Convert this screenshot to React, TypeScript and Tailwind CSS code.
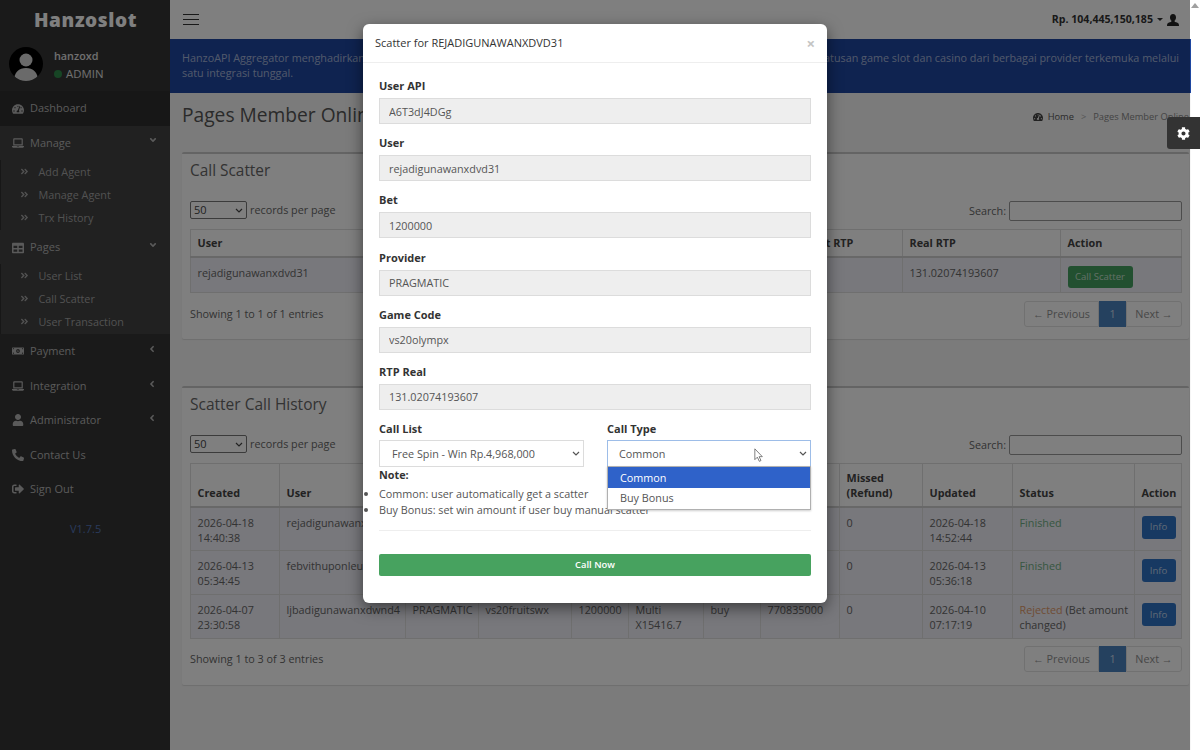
import {
  FaTachometerAlt,
  FaLaptop,
  FaTable,
  FaMoneyBillAlt,
  FaUser,
  FaPhoneAlt,
  FaSignOutAlt,
  FaCog,
  FaAngleDoubleRight,
  FaAngleDown,
  FaAngleLeft,
} from "react-icons/fa";
import type { ReactNode } from "react";

function MenuRow({ icon, label, arrow, rowClass = "h-[34.5px]" }: { icon: ReactNode; label: string; arrow?: "down" | "left"; rowClass?: string }) {
  return (
    <div className={"relative flex items-center pl-3 text-[#b5b5b5] " + rowClass}>
      <span className="flex w-[18px] justify-start text-[12px]">{icon}</span>
      <span>{label}</span>
      {arrow === "down" && <FaAngleDown className="absolute right-[12px] top-[9px] text-[10px]" />}
      {arrow === "left" && <FaAngleLeft className="absolute right-[13px] top-[10px] text-[10px]" />}
    </div>
  );
}

function SubRow({ label }: { label: string }) {
  return (
    <div className="flex h-[23.2px] items-center border-l-[1.5px] border-[#2e2e2e] pl-[18.5px] text-[10.8px] text-[#a4a4a4]">
      <FaAngleDoubleRight className="mr-[10px] text-[9px]" />
      <span>{label}</span>
    </div>
  );
}

function Sidebar() {
  return (
    <aside className="w-[170px] shrink-0 bg-[#343434] text-[11px]">
      <div className="flex h-[40px] items-center justify-center pl-[1px] text-[19px] font-extrabold tracking-[0.6px] text-white">
        Hanzoslot
      </div>
      <div className="flex h-[51px] items-start pl-[9px] pt-[7px]">
        <div className="h-[34px] w-[34px] overflow-hidden rounded-full bg-black">
          <svg viewBox="0 0 34 34" className="h-full w-full">
            <circle cx="17" cy="13" r="6.5" fill="#d4d4d4" />
            <path d="M5 34c0-9 5-13 12-13s12 4 12 13z" fill="#d4d4d4" />
          </svg>
        </div>
        <div className="ml-[11px] text-[#e0e0e0]">
          <div className="h-[18px] text-[10.8px] font-semibold leading-[18px]">hanzoxd</div>
          <div className="flex h-[18px] items-center text-[11.4px]">
            <span className="mr-[4px] h-[8px] w-[8px] rounded-full bg-[#2e8a4a]" />
            ADMIN
          </div>
        </div>
      </div>
      <MenuRow icon={<FaTachometerAlt />} label="Dashboard" rowClass="h-[35px] bg-[#2e2e2e]" />
      <div className="h-[105px] bg-[#424242]">
        <MenuRow icon={<FaLaptop />} label="Manage" arrow="down" rowClass="h-[34px]" />
        <SubRow label="Add Agent" />
        <SubRow label="Manage Agent" />
        <SubRow label="Trx History" />
      </div>
      <div className="h-[103px] bg-[#424242]">
        <MenuRow icon={<FaTable />} label="Pages" arrow="down" rowClass="h-[33px]" />
        <SubRow label="User List" />
        <SubRow label="Call Scatter" />
        <SubRow label="User Transaction" />
      </div>
      <MenuRow icon={<FaMoneyBillAlt />} label="Payment" arrow="left" />
      <MenuRow icon={<FaLaptop />} label="Integration" arrow="left" />
      <MenuRow icon={<FaUser />} label="Administrator" arrow="left" />
      <MenuRow icon={<FaPhoneAlt />} label="Contact Us" />
      <MenuRow icon={<FaSignOutAlt />} label="Sign Out" />
      <div className="mt-[14px] pl-[70px] text-[#5476b8]">V1.7.5</div>
    </aside>
  );
}

function Chevron({ className }: { className: string }) {
  return (
    <svg viewBox="0 0 8 5" className={"pointer-events-none absolute h-[5px] w-[8px] " + className}>
      <path d="M1 1l3 3 3-3" fill="none" stroke="currentColor" strokeWidth="1.2" />
    </svg>
  );
}

function Pager() {
  return (
    <div className="flex h-[26px] text-[#8f8f8f]">
      <span className="flex w-[75px] items-center justify-center rounded-l-[3px] border border-[#e2e2e2]">← Previous</span>
      <span className="flex w-[27px] items-center justify-center bg-[#4a82be] text-white/70">1</span>
      <span className="flex w-[56px] items-center justify-center rounded-r-[3px] border border-[#e2e2e2]">Next →</span>
    </div>
  );
}

function TableTools() {
  return (
    <div className="flex items-start justify-between">
      <div className="flex h-[18px] items-center text-[#666]">
        <div className="relative mr-[3px] text-[#444]">
          <select defaultValue="50" className="block h-[18px] w-[57px] appearance-none rounded-[2px] border border-[#777] bg-white pl-[3px] text-[11px]">
            <option>50</option>
          </select>
          <Chevron className="right-[4px] top-[7px]" />
        </div>
        records per page
      </div>
      <div className="flex items-center text-[#666]">
        Search:
        <input className="ml-[3px] h-[20px] w-[173px] rounded-[2px] border border-[#999] bg-white" />
      </div>
    </div>
  );
}

const th = "border border-[#dedede] px-[6.5px] pb-[5px] align-bottom text-left font-bold text-[#444]";
const td = "border border-[#dedede] px-[6.5px] pt-[7px] align-top";

function CallScatterCard() {
  return (
    <section className="h-[187px] rounded-[2px] border-t-2 border-t-[#c8c8c8] bg-white pl-[8px] pr-[7px] shadow-[0_1px_1px_rgba(0,0,0,0.1)]">
      <h2 className="mb-[19px] mt-[6px] text-[15.4px] leading-[22px] text-[#666]">Call Scatter</h2>
      <TableTools />
      <table className="mt-[8px] w-[991px] table-fixed border-collapse text-[#666]">
        <colgroup>
          <col className="w-[598px]" />
          <col className="w-[114px]" />
          <col className="w-[158px]" />
          <col className="w-[121px]" />
        </colgroup>
        <thead>
          <tr className="h-[27px] border-b-2 border-b-[#d0d0d0]">
            <th className={th}>User</th>
            <th className={th}>Target RTP</th>
            <th className={th}>Real RTP</th>
            <th className={th}>Action</th>
          </tr>
        </thead>
        <tbody>
          <tr className="h-[36px] bg-[#f0f0f8]">
            <td className={td}>rejadigunawanxdvd31</td>
            <td className={td} />
            <td className={td}>131.02074193607</td>
            <td className={td + " !pt-[8px]"}>
              <button className="block h-[22px] w-[65px] rounded-[3px] bg-[#44a060] text-[9.6px] text-white/70">Call Scatter</button>
            </td>
          </tr>
        </tbody>
      </table>
      <div className="mt-[8px] flex items-center justify-between text-[#666]">
        <span>Showing 1 to 1 of 1 entries</span>
        <Pager />
      </div>
    </section>
  );
}

const historyRows = [
  { created: ["2026-04-18", "14:40:38"], user: "rejadigunawanxdvd31", updated: ["2026-04-18", "14:52:44"], status: "Finished" },
  { created: ["2026-04-13", "05:34:45"], user: "febvithuponleuwi", updated: ["2026-04-13", "05:36:18"], status: "Finished" },
  { created: ["2026-04-07", "23:30:58"], user: "ljbadigunawanxdwnd4", updated: ["2026-04-10", "07:17:19"], status: "Rejected" },
];

function HistoryCard() {
  return (
    <section className="mt-[47px] h-[299px] rounded-[2px] border-t-2 border-t-[#c8c8c8] bg-white pl-[8px] pr-[7px] shadow-[0_1px_1px_rgba(0,0,0,0.1)]">
      <h2 className="mb-[20px] mt-[5px] text-[15.5px] leading-[22px] text-[#666]">Scatter Call History</h2>
      <TableTools />
      <table className="mt-[8px] w-[991px] table-fixed border-collapse text-[#666]">
        <colgroup>
          <col className="w-[89px]" />
          <col className="w-[126px]" />
          <col className="w-[73px]" />
          <col className="w-[93px]" />
          <col className="w-[57px]" />
          <col className="w-[75px]" />
          <col className="w-[57px]" />
          <col className="w-[79px]" />
          <col className="w-[83px]" />
          <col className="w-[90px]" />
          <col className="w-[122px]" />
          <col className="w-[47px]" />
        </colgroup>
        <thead>
          <tr className="h-[43px] border-b-2 border-b-[#d0d0d0]">
            <th className={th}>Created</th>
            <th className={th}>User</th>
            <th className={th} />
            <th className={th} />
            <th className={th} />
            <th className={th} />
            <th className={th} />
            <th className={th} />
            <th className={th}>Missed (Refund)</th>
            <th className={th}>Updated</th>
            <th className={th}>Status</th>
            <th className={th}>Action</th>
          </tr>
        </thead>
        <tbody>
          {historyRows.map((row, i) => (
            <tr key={row.created[0]} className="h-[44px] bg-[#f0f0f8]">
              <td className={td}>
                {row.created[0]}
                <br />
                {row.created[1]}
              </td>
              <td className={td + " overflow-hidden whitespace-nowrap"}>{row.user}</td>
              <td className={td}>{i === 2 && "PRAGMATIC"}</td>
              <td className={td}>{i === 2 && "vs20fruitswx"}</td>
              <td className={td}>{i === 2 && "1200000"}</td>
              <td className={td}>{i === 2 && "Multi X15416.7"}</td>
              <td className={td}>{i === 2 && "buy"}</td>
              <td className={td}>{i === 2 && "770835000"}</td>
              <td className={td}>0</td>
              <td className={td}>
                {row.updated[0]}
                <br />
                {row.updated[1]}
              </td>
              <td className={td + " !pr-0"}>
                <span className={row.status === "Finished" ? "text-[#6fae82]" : "text-[#e09a6a]"}>{row.status}</span>
                {row.status === "Rejected" && " (Bet amount changed)"}
              </td>
              <td className={td + " !pt-[8px]"}>
                <button className="block h-[23px] w-[34px] rounded-[3px] bg-[#2f72c4] text-[9.6px] text-white/70">Info</button>
              </td>
            </tr>
          ))}
        </tbody>
      </table>
      <div className="mt-[7px] flex items-center justify-between text-[#666]">
        <span>Showing 1 to 3 of 3 entries</span>
        <Pager />
      </div>
    </section>
  );
}

function Content() {
  return (
    <main className="flex-1 bg-[#f6f6f6] text-[10.8px] leading-[15.4px]">
      <div className="flex h-[39px] items-center justify-between bg-white pl-[13px] pr-[12px]">
        <div className="flex w-[16px] flex-col gap-[3.5px]">
          <span className="h-[1.5px] bg-[#333]" />
          <span className="h-[1.5px] bg-[#333]" />
          <span className="h-[1.5px] bg-[#333]" />
        </div>
        <div className="flex items-center text-[#333]">
          <span className="text-[10.6px] font-bold">Rp. 104,445,150,185</span>
          <span className="ml-[4px] mr-[4px] h-0 w-0 border-x-[3px] border-t-[3px] border-x-transparent border-t-[#333]" />
          <svg viewBox="0 0 12 12" className="h-[12px] w-[12px] text-[#222]">
            <path d="M6 0c1.900 0 3 1.400 3 3.400 0 1.300-.6 2.600-1.400 3.200v1c0 .5 3 1 3.900 2 .3.4.5 1.300.5 2.400H0c0-1.100.2-2 .5-2.400.9-1 3.900-1.500 3.900-2v-1C3.600 6 3 4.700 3 3.400 3 1.400 4.100 0 6 0z" fill="currentColor" />
          </svg>
        </div>
      </div>
      <div className="h-[54px] bg-[#1e46a0] px-[12px] pt-[11px] leading-[15px] text-white/60">
        <div className="flex justify-between">
          <span>HanzoAPI Aggregator menghadirkan</span>
          <span>ratusan game slot dan casino dari berbagai provider terkemuka melalui</span>
        </div>
        <div>satu integrasi tunggal.</div>
      </div>
      <div className="flex h-[59px] items-start justify-between pl-[12px] pr-[2px]">
        <h1 className="mt-[8px] text-[19.2px] leading-[27px] text-[#555]">Pages Member Online</h1>
        <div className="mt-[16px] flex items-center text-[9.3px] text-[#888]">
          <FaTachometerAlt className="mr-[5px] text-[10px] text-[#444]" />
          <span className="text-[#555]">Home</span>
          <span className="mx-[7px] text-[#aaa]">&gt;</span>
          <span className="whitespace-nowrap">Pages Member Online</span>
        </div>
      </div>
      <div className="pl-[12px] pr-[2px]">
        <CallScatterCard />
        <HistoryCard />
      </div>
    </main>
  );
}

function Field({ label, value }: { label: string; value: string }) {
  return (
    <div className="mb-[5.2px]">
      <label className="block h-[26px] pt-[6px] text-[11px] font-bold leading-[16px] text-[#333]">{label}</label>
      <input
        readOnly
        value={value}
        className="h-[26px] w-full border border-[#dcdcdc] bg-[#eeeeee] px-[9px] text-[10.8px] text-[#555]"
      />
    </div>
  );
}

function ScatterModal() {
  return (
    <div className="absolute left-[363px] top-[24px] z-20 h-[579px] w-[464px] rounded-[6px] bg-white text-[10.8px] text-[#555] shadow-[0_5px_15px_rgba(0,0,0,0.5)]">
      <div className="flex h-[39px] items-center justify-between border-b border-[#eeeeee] px-[12px]">
        <span className="text-[11px] text-[#333]">Scatter for REJADIGUNAWANXDVD31</span>
        <span className="text-[15px] font-bold text-[#c4c4c4]">×</span>
      </div>
      <div className="px-[16px] pt-[9px]">
        <Field label="User API" value="A6T3dJ4DGg" />
        <Field label="User" value="rejadigunawanxdvd31" />
        <Field label="Bet" value="1200000" />
        <Field label="Provider" value="PRAGMATIC" />
        <Field label="Game Code" value="vs20olympx" />
        <Field label="RTP Real" value="131.02074193607" />
        <div className="relative flex justify-between">
          <div className="w-[205px]">
            <label className="block h-[25px] pt-[6px] text-[11px] font-bold leading-[16px] text-[#333]">Call List</label>
            <div className="relative">
              <select defaultValue="fs" className="block h-[27px] w-full appearance-none border border-[#dcdcdc] bg-white pl-[12px] text-[10.8px] text-[#555]">
                <option value="fs">Free Spin - Win Rp.4,968,000</option>
              </select>
              <Chevron className="right-[4px] top-[11px]" />
            </div>
          </div>
          <div className="relative w-[204px]">
            <label className="block h-[25px] pt-[6px] text-[11px] font-bold leading-[16px] text-[#333]">Call Type</label>
            <div className="relative">
              <select defaultValue="common" className="block h-[27px] w-full appearance-none border border-[#9dbde8] bg-white pl-[11px] text-[10.8px] text-[#555]">
                <option value="common">Common</option>
                <option value="buy">Buy Bonus</option>
              </select>
              <Chevron className="right-[4px] top-[11px]" />
            </div>
            <div className="absolute left-0 top-[51px] z-10 w-full border border-[#b0b0b0] bg-white shadow-[0_1px_2px_rgba(0,0,0,0.2)]">
              <div className="flex h-[21px] items-center bg-[#2f62c9] pl-[12px] text-white">Common</div>
              <div className="flex h-[20.5px] items-center pl-[12px] text-[#555]">Buy Bonus</div>
            </div>
            <svg viewBox="0 0 12 18" className="absolute left-[147px] top-[33px] z-20 h-[15px] w-[10px]">
              <path d="M1 1v13l3-3 2.400 5 2-1-2.300-4.600H10z" fill="#fff" stroke="#666" strokeWidth="1" />
            </svg>
          </div>
        </div>
        <div className="font-bold leading-[15px] text-[#333]">Note:</div>
        <ul className="mt-[4px] list-outside list-disc leading-[15.5px] text-[#555]">
          <li>Common: user automatically get a scatter</li>
          <li>Buy Bonus: set win amount if user buy manual scatter</li>
        </ul>
        <div className="mt-[13px] border-t border-[#eeeeee]" />
        <button className="mt-[23px] block h-[22px] w-full rounded-[2px] bg-[#47a25f] text-[9.4px] font-semibold text-white">Call Now</button>
      </div>
    </div>
  );
}

export default function App() {
  return (
    <div className="relative flex h-[750px] w-full overflow-hidden bg-white font-['Open_Sans',sans-serif]">
      <div className="relative flex w-[1190px] shrink-0">
        <Sidebar />
        <Content />
        <div className="absolute inset-0 z-10 bg-black/50" />
      </div>
      <div className="flex flex-1 justify-center pt-[3px]">
        <span className="h-0 w-0 border-x-[4px] border-b-[5px] border-x-transparent border-b-[#a0a0a0]" />
      </div>
      <div className="absolute right-0 top-[117px] z-20 flex h-[32px] w-[33px] items-center justify-center rounded-l-[3px] bg-[#333] text-white">
        <FaCog className="text-[13px]" />
      </div>
      <ScatterModal />
    </div>
  );
}
